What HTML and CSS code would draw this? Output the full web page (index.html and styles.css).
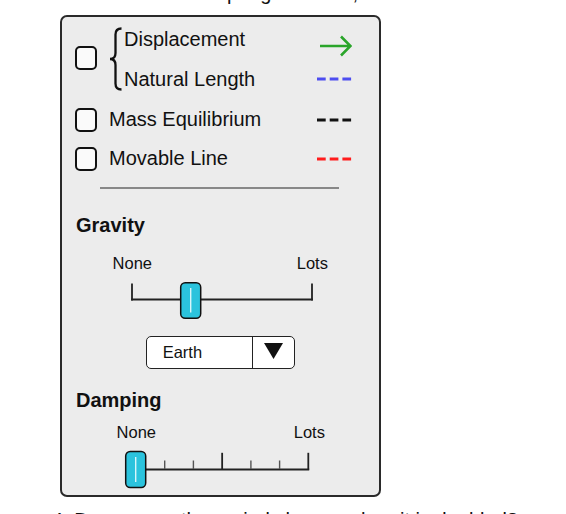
FILE: index.html
```html
<!DOCTYPE html>
<html>
<head>
<meta charset="utf-8">
<link rel="stylesheet" href="styles.css">
</head>
<body>
<div class="top-clip"><div class="top-text">Set the spring constant, and then mark the</div></div>
<div class="panel">
  <div class="row row-pair">
    <span class="check"></span>
    <svg class="brace" width="13" height="64" viewBox="0 0 13 64"><path d="M12.5,1.5 C8.5,1.5 6.5,3 6.5,7.5 L6.5,26 C6.5,30 4.5,32 1,32 C4.5,32 6.5,34 6.5,38 L6.5,56.5 C6.5,61 8.5,62.5 12.5,62.5" fill="none" stroke="#111" stroke-width="2.3"/></svg>
    <div class="pair-lines">
      <div class="line"><span>Displacement</span><svg class="ind" width="35" height="40" viewBox="0 0 35 40"><path d="M3,27 L33,27 M24,17.5 L33.5,27 L24,36.5" fill="none" stroke="#2aa52a" stroke-width="2.6"/></svg></div>
      <div class="line"><span>Natural Length</span><svg class="ind" width="35" height="4" viewBox="0 0 35 4"><g fill="#4d4df0"><rect x="0" y="0.5" width="8.7" height="3"/><rect x="12.7" y="0.5" width="8.7" height="3"/><rect x="25.4" y="0.5" width="8.7" height="3"/></g></svg></div>
    </div>
  </div>
  <div class="row row-single first">
    <span class="check"></span>
    <span class="label">Mass Equilibrium</span>
    <svg class="ind" width="35" height="4" viewBox="0 0 35 4"><g fill="#111"><rect x="0" y="0.5" width="8.7" height="3"/><rect x="12.7" y="0.5" width="8.7" height="3"/><rect x="25.4" y="0.5" width="8.7" height="3"/></g></svg>
  </div>
  <div class="row row-single">
    <span class="check"></span>
    <span class="label">Movable Line</span>
    <svg class="ind" width="35" height="4" viewBox="0 0 35 4"><g fill="#ff1c1c"><rect x="0" y="0.5" width="8.7" height="3"/><rect x="12.7" y="0.5" width="8.7" height="3"/><rect x="25.4" y="0.5" width="8.7" height="3"/></g></svg>
  </div>
  <div class="separator"></div>

  <div class="title gravity-title">Gravity</div>
  <div class="scale-labels gravity-labels"><span>None</span><span>Lots</span></div>
  <svg class="slider gravity-slider" width="240" height="37" viewBox="0 0 240 37">
    <g stroke="#222" stroke-width="1.8" fill="none">
      <line x1="30" y1="1.5" x2="30" y2="18.4"/>
      <line x1="210" y1="1.5" x2="210" y2="18.4"/>
      <line x1="29.1" y1="17.5" x2="210.9" y2="17.5"/>
    </g>
    <rect x="78.7" y="0.75" width="20" height="35.5" rx="4.5" fill="#2bc3dd" stroke="#111" stroke-width="1.5"/>
    <line x1="88.7" y1="6" x2="88.7" y2="30.5" stroke="#d9f6fb" stroke-width="1.4"/>
  </svg>
  <div class="combo">
    <span class="combo-value">Earth</span>
    <span class="combo-btn"><svg width="19" height="16" viewBox="0 0 19 16"><polygon points="0,0 19,0 9.5,16" fill="#111"/></svg></span>
  </div>

  <div class="title damping-title">Damping</div>
  <div class="scale-labels damping-labels"><span>None</span><span>Lots</span></div>
  <svg class="slider damping-slider" width="233" height="37" viewBox="0 0 233 37">
    <g stroke="#222" stroke-width="1.8" fill="none">
      <line x1="30" y1="1.8" x2="30" y2="18.8"/>
      <line x1="116.15" y1="1.8" x2="116.15" y2="18.8"/>
      <line x1="202.3" y1="1.8" x2="202.3" y2="18.8"/>
      <line x1="29.1" y1="18.5" x2="203.2" y2="18.5"/>
    </g>
    <g stroke="#555" stroke-width="1.4">
      <line x1="58.7" y1="9.5" x2="58.7" y2="18"/>
      <line x1="87.4" y1="9.5" x2="87.4" y2="18"/>
      <line x1="144.9" y1="9.5" x2="144.9" y2="18"/>
      <line x1="173.6" y1="9.5" x2="173.6" y2="18"/>
    </g>
    <rect x="19.7" y="0.4" width="20" height="36.2" rx="4.5" fill="#2bc3dd" stroke="#111" stroke-width="1.5"/>
    <line x1="29.7" y1="6" x2="29.7" y2="31" stroke="#d9f6fb" stroke-width="1.4"/>
  </svg>
</div>
<div class="bottom-text">4. Do you see the period change when it is doubled?</div>
</body>
</html>
```
FILE: styles.css
```css
* { box-sizing: border-box; }
html, body { margin: 0; padding: 0; background: #fff; }
body {
  width: 566px;
  height: 514px;
  overflow: hidden;
  font-family: "Liberation Sans", Arial, sans-serif;
  color: #111;
}
.top-clip { height: 15px; overflow: hidden; }
.top-text {
  margin-top: -18.5px;
  font-size: 20px;
  line-height: 23px;
  padding-left: 148px;
  white-space: nowrap;
}
.panel {
  width: 321px;
  height: 482px;
  margin-left: 60px;
  border: 2px solid #2a2a2a;
  border-radius: 7px;
  background: #ececec;
  padding: 2px 27px 0 13px;
  font-size: 20px;
}
.row { display: flex; align-items: center; }
.check {
  flex: none;
  width: 22px;
  height: 24px;
  border: 2px solid #111;
  border-radius: 5px;
  background: #fafafa;
  margin-right: 12px;
}
.row-pair { height: 80px; }
.row-pair .check { margin-top: -2px; }
.brace { flex: none; margin-right: 2px; }
.pair-lines { flex: 1; }
.line {
  display: flex;
  justify-content: space-between;
  align-items: center;
  height: 40px;
  line-height: 40px;
}
.ind { flex: none; display: block; }
.row-single { height: 39px; line-height: 39px; }
.row-single.first { margin-top: 1px; }
.label { flex: 1; }
.separator {
  margin-top: 9px;
  margin-left: 25px;
  width: 239px;
  height: 1.6px;
  background: #888;
}
.title {
  font-weight: bold;
  font-size: 20px;
  line-height: 24px;
  margin-left: 1px;
}
.gravity-title { margin-top: 24.5px; }
.damping-title { margin-top: 19px; }
.scale-labels {
  display: flex;
  justify-content: space-between;
  font-size: 16.5px;
  line-height: 20px;
}
.scale-labels span { width: 60px; text-align: center; }
.gravity-labels { margin-top: 16px; margin-left: 27.3px; width: 240px; }
.damping-labels { margin-top: 10px; margin-left: 31.3px; width: 233px; }
.slider { display: block; overflow: visible; }
.gravity-slider { margin-top: 9px; margin-left: 27.3px; }
.damping-slider { margin-top: 8.5px; margin-left: 31.3px; }
.combo {
  display: flex;
  width: 149.5px;
  height: 33px;
  margin-top: 17px;
  margin-left: 70.7px;
  border: 1.5px solid #222;
  border-radius: 5px;
  background: #fff;
}
.combo-value {
  flex: 1;
  padding-left: 16px;
  font-size: 16.5px;
  line-height: 31px;
}
.combo-btn {
  width: 42px;
  border-left: 1.5px solid #222;
  display: flex;
  align-items: center;
  justify-content: center;
  padding-bottom: 4px;
}
.combo-btn svg { display: block; }
.bottom-text {
  margin-top: 11.5px;
  padding-left: 52px;
  font-size: 20px;
  line-height: 23px;
  white-space: nowrap;
}
```
